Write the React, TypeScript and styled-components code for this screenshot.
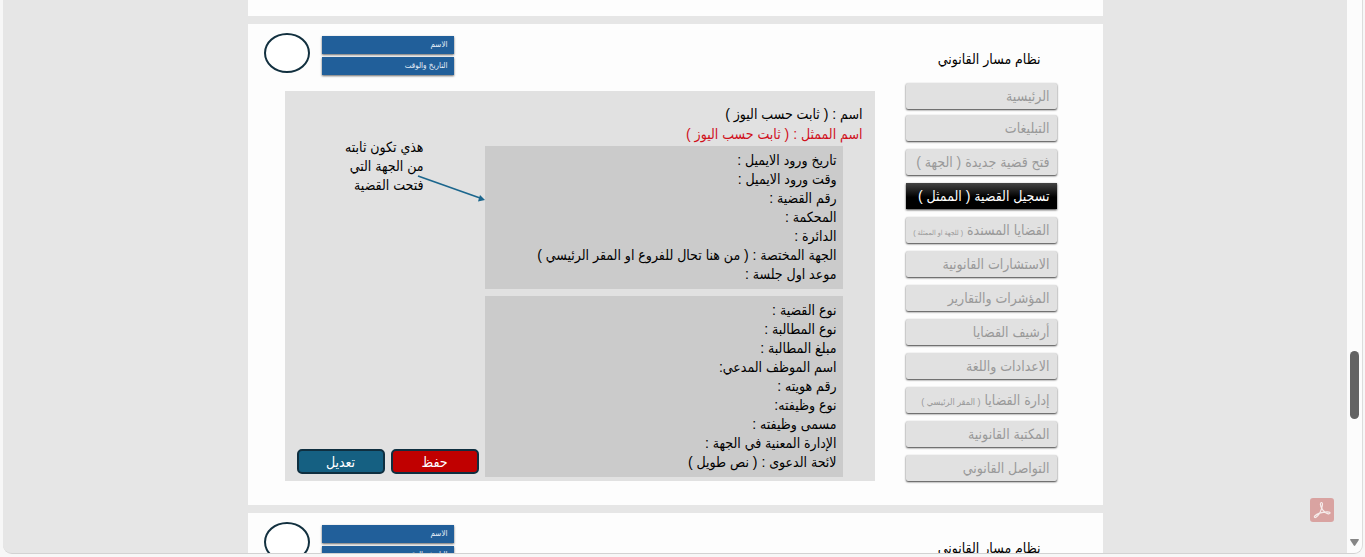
import React from "react";
import styled, { createGlobalStyle, css } from "styled-components";

const GlobalStyle = createGlobalStyle`
  *, *::before, *::after { box-sizing: border-box; }
  body {
    margin: 0;
    background: #f7f7f7;
    font-family: "Liberation Sans", "DejaVu Sans Condensed", "DejaVu Sans", sans-serif;
    color: #000;
  }
`;

const Frame = styled.div`
  position: relative;
  display: flex;
  height: calc(100vh - 3px);
  margin: 0 2px 3px 3px;
  overflow: hidden;
  background: #e6e6e6;
  border-right: 1px solid #dcdcdc;
  border-bottom: 1px solid #d2d2d2;
  border-radius: 0 0 9px 9px;
`;

const Pages = styled.main`
  flex: 1;
  display: flex;
  flex-direction: column;
  align-items: center;
  gap: 8px;
  overflow: hidden;
`;

const Sheet = styled.section`
  flex: none;
  display: flex;
  gap: 31px;
  width: 100%;
  max-width: 855px;
  min-height: 481px;
  padding: 9px 46px 24px 16px;
  background: #fdfdfd;
`;

const SheetEnd = styled.div`
  flex: none;
  width: 100%;
  max-width: 855px;
  height: 16px;
  background: #fdfdfd;
`;

const Side = styled.aside`
  flex: none;
  width: 151px;
`;

const Title = styled.h1`
  margin: 0 0 14px;
  padding: 16px 16px 0;
  font-size: 14px;
  font-weight: 400;
  line-height: 20px;
  white-space: nowrap;
`;

const Menu = styled.nav`
  display: flex;
  flex-direction: column;
  gap: 8px;
`;

const MenuGroup = styled.div`
  display: flex;
  flex-direction: column;
  gap: 6px;
`;

const MenuLink = styled.a<{ $active?: boolean }>`
  display: block;
  height: 26px;
  padding: 0 7px;
  border-radius: 2px;
  background: #e1e1e1;
  box-shadow: 0 1px 2px rgba(0, 0, 0, 0.75);
  color: #999;
  font-size: 14px;
  line-height: 26px;
  text-decoration: none;
  white-space: nowrap;
  ${(p) =>
    p.$active &&
    css`
      border-radius: 0;
      background: linear-gradient(#444, #000 55%);
      color: #fff;
    `}
`;

const Small = styled.small<{ $size: number }>`
  font-size: ${(p) => p.$size}px;
`;

const Content = styled.div`
  flex: 1;
  min-width: 0;
  display: flex;
  flex-direction: column;
  gap: 16px;
`;

const Header = styled.header`
  display: flex;
  justify-content: flex-end;
  align-items: flex-start;
  gap: 12px;
  height: 42px;
`;

const Avatar = styled.div`
  width: 46px;
  height: 40px;
  border: 2px solid #12303f;
  border-radius: 50%;
  background: #fff;
`;

const Badges = styled.div`
  display: flex;
  flex-direction: column;
  gap: 3px;
  width: 132px;
  padding-top: 3px;
`;

const Badge = styled.div`
  height: 18px;
  padding: 0 6px;
  background: #215f9a;
  box-shadow: 0 1px 2px rgba(0, 0, 0, 0.6);
  color: #e8f0f8;
  font-size: 8px;
  line-height: 18px;
`;

const Panel = styled.div`
  flex: 1;
  display: flex;
  flex-direction: column;
  margin-left: 21px;
  padding: 13px 0 4px;
  background: #e1e1e1;
  font-size: 14px;
  line-height: 19px;
`;

const Owner = styled.p<{ $accent?: boolean }>`
  margin: 0;
  padding-right: 12px;
  line-height: 20px;
  color: ${(p) => (p.$accent ? "#d0101c" : "#000")};
`;

const Columns = styled.div`
  flex: 1;
  display: flex;
  margin-top: 2px;
  padding-right: 32px;
`;

const Blocks = styled.div`
  flex: 1;
  display: flex;
  flex-direction: column;
  gap: 7px;
`;

const Block = styled.ul`
  margin: 0;
  padding: 5px 6px;
  list-style: none;
  background: #cbcbcb;
  white-space: nowrap;
`;

const Aside = styled.div`
  position: relative;
  flex: none;
  width: 200px;
  display: flex;
  flex-direction: column;
  justify-content: space-between;
`;

const Note = styled.p`
  margin: -8px 0 0;
  padding: 0 61px 0 0;
  white-space: nowrap;
`;

const Arrow = styled.svg`
  position: absolute;
  top: 28px;
  right: 0;
`;

const Actions = styled.div`
  display: flex;
  gap: 6px;
  padding: 0 6px 3px 12px;
`;

const Action = styled.button<{ $color: string }>`
  flex: 1;
  height: 25px;
  padding: 0;
  border: 2px solid #0f2f40;
  border-radius: 5px;
  background: ${(p) => p.$color};
  color: #fff;
  font: inherit;
  line-height: 20px;
`;

const Scrollbar = styled.div`
  flex: none;
  display: flex;
  flex-direction: column;
  align-items: center;
  width: 15px;
  padding: 0 3px 7px;
  background: #fcfcfc;
`;

const Gap = styled.div<{ $grow: number }>`
  flex: ${(p) => p.$grow} 0 0;
`;

const Thumb = styled.div`
  width: 9px;
  height: 68px;
  border-radius: 5px;
  background: #636363;
`;

const PdfButton = styled.button`
  position: absolute;
  right: 28px;
  bottom: 31px;
  width: 24px;
  height: 24px;
  padding: 0;
  border: 0;
  border-radius: 3px;
  background: #d9a3a1;
`;

type Item = { text: string; note?: string; noteSize?: number; active?: boolean };

const firstItems: Item[] = [{ text: "الرئيسية" }, { text: "التبليغات" }];

const items: Item[] = [
  { text: "فتح قضية جديدة ( الجهة )" },
  { text: "تسجيل القضية ( الممثل )", active: true },
  { text: "القضايا المسندة", note: "( للجهة او الممثلة )", noteSize: 7 },
  { text: "الاستشارات القانونية" },
  { text: "المؤشرات والتقارير" },
  { text: "أرشيف القضايا" },
  { text: "الاعدادات واللغة" },
  { text: "إدارة القضايا", note: "( المقر الرئيسي )", noteSize: 9 },
  { text: "المكتبة القانونية" },
  { text: "التواصل القانوني" },
];

const mailFields = [
  "تاريخ ورود الايميل :",
  "وقت ورود الايميل :",
  "رقم القضية :",
  "المحكمة :",
  "الدائرة :",
  "الجهة المختصة : ( من هنا تحال للفروع او المقر الرئيسي )",
  "موعد اول جلسة :",
];

const caseFields = [
  "نوع القضية :",
  "نوع المطالبة :",
  "مبلغ المطالبة :",
  "اسم الموظف المدعي:",
  "رقم هويته :",
  "نوع وظيفته:",
  "مسمى وظيفته :",
  "الإدارة المعنية في الجهة :",
  "لائحة الدعوى : ( نص طويل )",
];

const renderItem = (i: Item) => (
  <MenuLink key={i.text} href="#" $active={i.active}>
    {i.text} {i.note && <Small $size={i.noteSize ?? 9}>{i.note}</Small>}
  </MenuLink>
);

const SheetHeader = () => (
  <Header>
    <Badges>
      <Badge>الاسم</Badge>
      <Badge>التاريخ والوقت</Badge>
    </Badges>
    <Avatar />
  </Header>
);

export default function App() {
  return (
    <>
      <GlobalStyle />
      <Frame>
        <Pages>
          <SheetEnd />
          <Sheet dir="rtl">
            <Side>
              <Title>نظام مسار القانوني</Title>
              <Menu>
                <MenuGroup>{firstItems.map(renderItem)}</MenuGroup>
                {items.map(renderItem)}
              </Menu>
            </Side>
            <Content>
              <SheetHeader />
              <Panel>
                <Owner>اسم : ( ثابت حسب اليوز )</Owner>
                <Owner $accent>اسم الممثل : ( ثابت حسب اليوز )</Owner>
                <Columns>
                  <Blocks>
                    <Block>{mailFields.map((f) => <li key={f}>{f}</li>)}</Block>
                    <Block>{caseFields.map((f) => <li key={f}>{f}</li>)}</Block>
                  </Blocks>
                  <Aside>
                    <Note>
                      هذي تكون ثابته
                      <br />
                      من الجهة التي
                      <br />
                      فتحت القضية
                    </Note>
                    <Arrow width="68" height="30" viewBox="0 0 68 30" aria-hidden="true">
                      <path d="M1 2 L63 24" stroke="#1b668d" strokeWidth="1.7" fill="none" />
                      <path d="M68 26 L61 27.500 L63 21 Z" fill="#1b668d" />
                    </Arrow>
                    <Actions>
                      <Action type="button" $color="#c00000">حفظ</Action>
                      <Action type="button" $color="#156082">تعديل</Action>
                    </Actions>
                  </Aside>
                </Columns>
              </Panel>
            </Content>
          </Sheet>
          <Sheet dir="rtl">
            <Side>
              <Title as="h2">نظام مسار القانوني</Title>
            </Side>
            <Content>
              <SheetHeader />
            </Content>
          </Sheet>
        </Pages>
        <Scrollbar aria-hidden="true">
          <Gap $grow={351} />
          <Thumb />
          <Gap $grow={120} />
          <svg width="9" height="7" viewBox="0 0 9 7">
            <path d="M0.5 0 H8.500 Q9 0 8.800 1 L5.200 6.500 Q4.500 7.300 3.800 6.500 L0.200 1 Q0 0 0.500 0 Z" fill="#868686" />
          </svg>
        </Scrollbar>
        <PdfButton type="button" aria-label="PDF">
          <svg width="24" height="24" viewBox="0 0 24 24" fill="none" stroke="#f6eceb" strokeWidth="1.200" strokeLinejoin="round">
            <path d="M11.300 4.500 C12.600 4.300 12.700 6 12.100 8.500 C11.200 12.500 8.500 17.500 6 19.300 C4.800 20 3.900 19 4.800 18 C6.800 15.800 12.500 14 17 13.800 C19.500 13.700 20.400 14.500 19.900 15.300 C19.200 16.400 16.500 15.500 14.500 13.700 C12 11.500 10.500 8.500 10.400 6.200 C10.400 5.200 10.700 4.600 11.300 4.500 Z" />
          </svg>
        </PdfButton>
      </Frame>
    </>
  );
}
